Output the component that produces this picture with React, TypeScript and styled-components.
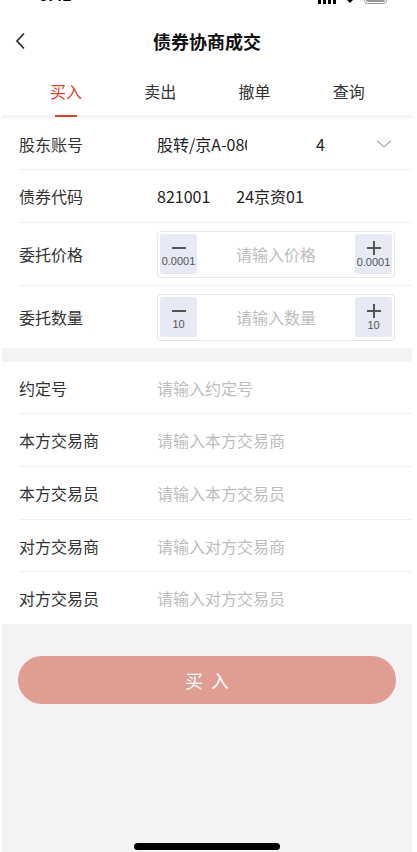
import React from 'react';
import styled, {createGlobalStyle} from 'styled-components';

const GlobalStyle = createGlobalStyle`
  html, body {
    margin: 0;
    padding: 0;
    background: #ffffff;
  }
  body {
    font-family: "Noto Sans CJK SC", "Noto Sans", sans-serif;
  }
  * {
    box-sizing: border-box;
  }
`;

const Page = styled.div`
  width: 410px;
  margin-left: 2px;
  min-height: 852px;
  background: #f4f4f4;
  display: flex;
  flex-direction: column;
`;

const Top = styled.div`
  background: #ffffff;
`;

const StatusBar = styled.div`
  height: 16px;
  overflow: hidden;
  display: flex;
  align-items: flex-start;
  justify-content: space-between;
  padding: 0 22px 0 37px;
`;

const Time = styled.div`
  font-family: "Liberation Sans", sans-serif;
  font-weight: 700;
  font-size: 16px;
  line-height: 16px;
  margin-top: -12px;
  color: #000;
`;

const StatusIcons = styled.div`
  display: flex;
  gap: 6px;
  margin-top: -8px;
  align-items: flex-end;

  svg {
    display: block;
  }
`;

const NavBar = styled.div`
  height: 50px;
  display: flex;
  align-items: center;
  justify-content: center;
  position: relative;
`;

const BackButton = styled.div`
  position: absolute;
  left: 12px;
  top: 16px;
  display: flex;
`;

const Title = styled.div`
  font-size: 18px;
  font-weight: 600;
  color: #111;
`;

const Tabs = styled.div`
  height: 49px;
  display: grid;
  grid-template-columns: repeat(4, 1fr);
  padding: 0 16px 0 17px;
`;

const Tab = styled.div<{ $active?: boolean }>`
  position: relative;
  display: flex;
  align-items: center;
  justify-content: center;
  font-size: 16px;
  color: ${p => (p.$active ? '#e0402a' : '#333')};

  &::after {
    content: '';
    display: ${p => (p.$active ? 'block' : 'none')};
    position: absolute;
    bottom: -2px;
    left: 50%;
    width: 22px;
    height: 2px;
    margin-left: -11px;
    background: #e0402a;
    z-index: 1;
  }
`;

const Divider = styled.div<{ $h: number }>`
  height: ${p => p.$h}px;
  background: #f4f4f4;
`;

const Section = styled.div`
  background: #ffffff;
  padding-left: 17px;
`;

const Row = styled.div<{ $h: number; $last?: boolean }>`
  height: ${p => p.$h}px;
  display: flex;
  align-items: center;
  padding-right: 17px;
  border-bottom: ${p => (p.$last ? 'none' : '1px solid #efefef')};
`;

const Label = styled.div`
  width: 138px;
  flex-shrink: 0;
  font-size: 16px;
  color: #333;
`;

const Value = styled.div`
  font-size: 16px;
  color: #222;
  display: flex;
  align-items: center;
`;

const Placeholder = styled.div`
  font-size: 16px;
  color: #bdbdbd;
`;

const Clip = styled.span<{ $w: number }>`
  display: inline-block;
  width: ${p => p.$w}px;
  overflow: hidden;
  white-space: nowrap;
`;

const Select = styled.div`
  flex: 1;
  display: flex;
  align-items: center;
  justify-content: space-between;
`;

const Stepper = styled.div`
  flex: 1;
  height: 47px;
  border: 1px solid #e6e6e6;
  border-radius: 4px;
  display: flex;
  align-items: center;
  padding: 0 2px;
`;

const StepButton = styled.div`
  width: 37px;
  height: 40px;
  border-radius: 3px;
  background: #e7eaf4;
  display: flex;
  flex-direction: column;
  align-items: center;
  justify-content: center;
`;

const StepText = styled.div`
  font-family: "Liberation Sans", sans-serif;
  font-size: 11px;
  line-height: 12px;
  color: #555;
  margin-top: 1px;
`;

const StepInput = styled.div`
  flex: 1;
  text-align: center;
  font-size: 16px;
  color: #bdbdbd;
`;

const ButtonArea = styled.div`
  padding: 32px 16px 0 16px;
`;

const SubmitButton = styled.div`
  height: 48px;
  border-radius: 24px;
  background: #e09d91;
  color: #ffffff;
  font-size: 18px;
  letter-spacing: 8px;
  display: flex;
  align-items: center;
  justify-content: center;
  padding-left: 8px;
`;

const Spacer = styled.div`
  flex: 1;
`;

const HomeBar = styled.div`
  width: 146px;
  height: 7px;
  border-radius: 4px;
  background: #000;
  margin: 0 auto 2px 132px;
`;

const Minus = () => (
  <svg width="16" height="12" viewBox="0 0 16 12">
    <rect x="1" y="5" width="14" height="2" fill="#555" />
  </svg>
);

const Plus = () => (
  <svg width="16" height="14" viewBox="0 0 16 14">
    <rect x="1" y="6" width="14" height="2" fill="#555" />
    <rect x="7" y="0" width="2" height="14" fill="#555" />
  </svg>
);

const StepField = ({placeholder, step}: { placeholder: string; step: string }) => (
  <Stepper>
    <StepButton>
      <Minus />
      <StepText>{step}</StepText>
    </StepButton>
    <StepInput>{placeholder}</StepInput>
    <StepButton>
      <Plus />
      <StepText>{step}</StepText>
    </StepButton>
  </Stepper>
);

const extraFields: [string, string, number][] = [
  ['约定号', '请输入约定号', 52],
  ['本方交易商', '请输入本方交易商', 53],
  ['本方交易员', '请输入本方交易员', 53],
  ['对方交易商', '请输入对方交易商', 52],
  ['对方交易员', '请输入对方交易员', 52],
];

export default function App() {
  return (
    <>
      <GlobalStyle />
      <Page>
        <Top>
          <StatusBar>
            <Time>9:41</Time>
            <StatusIcons>
              <svg width="18" height="12" viewBox="0 0 18 12">
                <rect x="0" y="8" width="3" height="4" fill="#000" />
                <rect x="5" y="6" width="3" height="6" fill="#000" />
                <rect x="10" y="3" width="3" height="9" fill="#000" />
                <rect x="15" y="0" width="3" height="12" fill="#000" />
              </svg>
              <svg width="16" height="12" viewBox="0 0 16 12">
                <path d="M8 11 L1 4 A10 10 0 0 1 15 4 Z" fill="#000" />
              </svg>
              <svg width="26" height="12" viewBox="0 0 26 12">
                <rect x="0.5" y="0.5" width="22" height="11" rx="3" fill="none" stroke="#999" />
                <rect x="2" y="2" width="19" height="8" rx="2" fill="#999" />
              </svg>
            </StatusIcons>
          </StatusBar>
          <NavBar>
            <BackButton>
              <svg width="14" height="18" viewBox="0 0 14 18">
                <path d="M10 1.5 L3 9 L10 16.5" fill="none" stroke="#222" strokeWidth="1.6" />
              </svg>
            </BackButton>
            <Title>债券协商成交</Title>
          </NavBar>
          <Tabs>
            <Tab $active>买入</Tab>
            <Tab>卖出</Tab>
            <Tab>撤单</Tab>
            <Tab>查询</Tab>
          </Tabs>
        </Top>
        <Divider $h={3} />
        <Section>
          <Row $h={52}>
            <Label>股东账号</Label>
            <Select>
              <Value>
                <Clip $w={90}>股转/京A-0800000</Clip>
                <span style={{marginLeft: 69}}>4</span>
              </Value>
              <svg width="16" height="10" viewBox="0 0 16 10" style={{marginRight: 3}}>
                <path d="M1 1.5 L8 8 L15 1.5" fill="none" stroke="#aaa" strokeWidth="1.2" />
              </svg>
            </Select>
          </Row>
          <Row $h={53}>
            <Label>债券代码</Label>
            <Value>
              <span>821001</span>
              <span style={{marginLeft: 26}}>24京资01</span>
            </Value>
          </Row>
          <Row $h={63}>
            <Label>委托价格</Label>
            <StepField placeholder="请输入价格" step="0.0001" />
          </Row>
          <Row $h={62} $last>
            <Label>委托数量</Label>
            <StepField placeholder="请输入数量" step="10" />
          </Row>
        </Section>
        <Divider $h={14} />
        <Section>
          {extraFields.map(([label, ph, h], i) => (
            <Row key={label} $h={h} $last={i === extraFields.length - 1}>
              <Label>{label}</Label>
              <Placeholder>{ph}</Placeholder>
            </Row>
          ))}
        </Section>
        <ButtonArea>
          <SubmitButton>买入</SubmitButton>
        </ButtonArea>
        <Spacer />
        <HomeBar />
      </Page>
    </>
  );
}
